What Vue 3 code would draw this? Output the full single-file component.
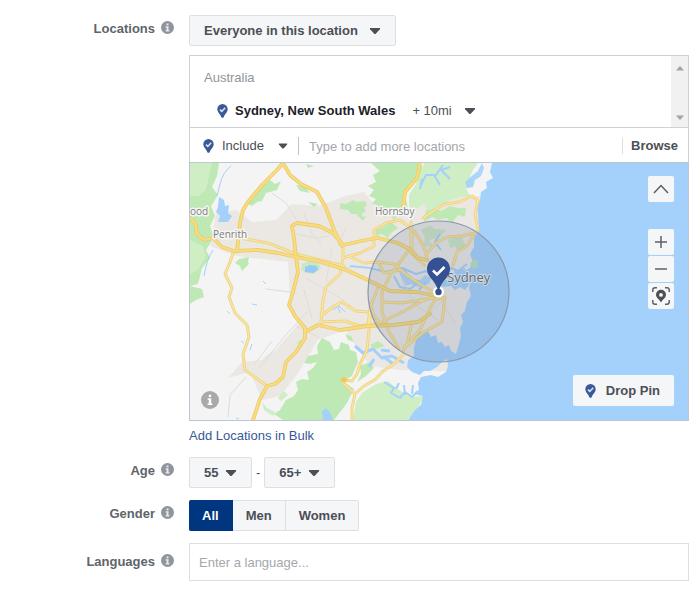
<script setup>
import { ref, h } from 'vue'

const audience = ref('Everyone in this location')
const radius = ref('+ 10mi')
const mode = ref('Include')
const query = ref('')
const minAge = ref('55')
const maxAge = ref('65+')
const gender = ref('All')
const language = ref('')

const genders = ['All', 'Men', 'Women']
const ages = Array.from({ length: 52 }, (_, i) => String(i + 13))

const InfoIcon = () =>
  h('svg', { width: 13, height: 13, viewBox: '0 0 13 13', 'aria-hidden': 'true' }, [
    h('circle', { cx: 6.5, cy: 6.5, r: 6.5, fill: '#90949c' }),
    h('path', { d: 'M5.5 2.4h2v1.8h-2zM4.6 5.3h2.9v3.9h.9v1.2H4.6V9.2h1V6.5h-1z', fill: '#e9ebee' })
  ])

const PinIcon = () =>
  h('svg', { width: 11, height: 14, viewBox: '0 0 11 14', 'aria-hidden': 'true' }, [
    h('path', { d: 'M5.5 0A5.2 5.2 0 0 0 .3 5.2C.3 8.3 3.3 9.8 4.3 13.2Q5.5 14.5 6.7 13.2C7.7 9.8 10.7 8.3 10.7 5.2A5.2 5.2 0 0 0 5.5 0z', fill: '#3b5998' }),
    h('path', { d: 'M3 5.6l1.8 1.8L8.200 3.7', fill: 'none', stroke: '#dfe6f5', 'stroke-width': 1.5 })
  ])

const Caret = () =>
  h('svg', { width: 12, height: 8, viewBox: '0 0 12 8', 'aria-hidden': 'true' }, [
    h('path', { d: 'M1.5 1h9q1.2 0 .4 1.2L7 6.6q-1 1-2 0L1.1 2.2Q.3 1 1.500 1z', fill: 'currentColor' })
  ])
</script>

<template>
  <form class="targeting" @submit.prevent>
    <div class="row">
      <label class="name" for="audience">Locations <InfoIcon /></label>
      <div class="field">
        <div class="picker button-like audience">
          <select id="audience" v-model="audience">
            <option>Everyone in this location</option>
          </select>
          <Caret />
        </div>

        <div class="chosen">
          <div class="places">
            <div class="country">Australia</div>
            <div class="place">
              <PinIcon />
              <strong>Sydney, New South Wales</strong>
              <div class="picker radius">
                <select v-model="radius" aria-label="Radius">
                  <option>+ 10mi</option>
                </select>
                <Caret />
              </div>
            </div>
          </div>
          <div class="scroller" aria-hidden="true">
            <svg width="10" height="6" viewBox="0 0 10 6"><path d="M1 5.500L5 1l4 4.500z" fill="#a3a3a3" /></svg>
            <svg width="10" height="6" viewBox="0 0 10 6"><path d="M1 .5L5 5 9 .5z" fill="#a3a3a3" /></svg>
          </div>
        </div>

        <div class="search">
          <PinIcon />
          <div class="picker mode">
            <select v-model="mode" aria-label="Include or exclude">
              <option>Include</option>
            </select>
            <Caret />
          </div>
          <input v-model="query" type="text" placeholder="Type to add more locations" aria-label="Add locations" />
          <button type="button" class="browse">Browse</button>
        </div>

        <div class="map">
          <svg class="canvas" viewBox="190 163 498 257" role="img" aria-label="Map of Sydney">
            <defs>
              <g id="highways">
                <path d="M283 163L276 171 262 185 248 202 243 210 240 223 237 251M283 163L290 175 301 184 317 192 326 208 334 230 342 246" />
                <path d="M190 218L195 223 197 234 204 240 213 238 222 247 234 251 258 250 278 253 296 257 322 262 346 270 370 281 390 291 416 292 437 296" />
                <path d="M296 257L294 238 292 226 297 223 319 226 333 233 343 245 366 240 378 238 398 243 411 250 418 258 427 260" />
                <path d="M296 257L298 272 293 292 289 305 295 316 305 328 305 338 296 352 286 362 283 377 275 384 267 386 260 399 253 420" />
                <path d="M305 332L318 325 340 330 368 326 394 325 418 322 430 314" />
                <path d="M420 163L417 178 405 192 403 207" />
              </g>
              <g id="streets">
                <path d="M234 251L230 262 225 274 232 288 229 297 235 313 247 325 249 337 243 354 245 370 256 378 267 386" />
                <path d="M240 238L268 243 296 254 344 266" />
                <path d="M343 245L343 258 340 274 326 287 323 300 321 322M343 258L360 253 374 246 374 230 386 223 400 220 415 232 424 247 427 258" />
                <path d="M348 256L364 263 378 262 394 264 408 276 420 284 437 294M423 218L432 212 445 204 459 202 472 196 478 201 475 214 478 230" />
                <path d="M427 253L437 242 447 237 462 236 475 233 467 246 457 252 453 265" />
                <path d="M412 233L412 246 400 262 390 275 382 292 382 312 388 330 399 349M411 222L411 246M378 262L384 273 400 270" />
                <path d="M321 316L334 306 342 302 356 311 368 312M321 322L345 321 360 326 380 323 406 310 426 299 438 296M382 302L402 303 434 298M368 325L370 308 378 288M380 323L374 316 370 304" />
                <path d="M371 308L369 330 367 350 360 364 357 374 352 381 345 380 343 383 355 394 352 408 352 420M355 394L364 386 376 379 382 372 395 363 403 355 404 347 420 330 430 308 438 296M434 300L445 297 442 322 424 332 404 348M408 340L412 322" />
                <path d="M408 250L424 265" />
              </g>
            </defs>

            <rect x="190" y="163" width="498" height="257" fill="#f3f4f3" />
            <!-- built-up area -->
            <path fill="#ebe8e4" d="M216 214L236 210 252 222 276 220 292 204 318 206 346 196 364 192 374 204 396 212 430 200 482 196 482 372 400 370 370 366 345 330 318 340 296 376 280 396 262 400 250 372 228 378 242 362 262 360 294 322 290 300 288 262 236 256 210 246z" />
            <path fill="#f3f4f3" d="M236 262L280 264 288 300 300 322 276 350 262 358 246 310 238 290z" />
            <!-- parks -->
            <g fill="#bfe9b4">
              <path d="M190 163H219L217 176 212 187 218 195 211 206 215 216 210 226 214 237 206 250 210 258 202 268 198 284 190 286z" />
              <path fill="#cfeec4" d="M190 163H212L206 190 198 196 190 196zM190 240L203 246 206 256 198 270 190 274z" />
              <path d="M262 187L270 180 275 184 281 181 277 190 266 193 262 201 257 202 252 206 246 203 254 198 256 192z" />
              <path d="M296 185L304 186 310 193 300 191zM308 202l10 2-4 3zM306 164l8 2-6 2zM239 259l10-2-1 5 1 2-7 7-2-5-5-3zM190 286l12 3 2 8-8 3-6 4z" />
              <path d="M340 203l6 1 7-4 4 2 8-1 2 5-3 1 2 5-4 1 0 6-5-5-6 0-3-4-8-1zM356 214l5 3 5-1-3 5z" />
              <path d="M371 163H420L424 170 417 178 410 188 405 196 408 208 402 204 400 212 403 217 397 216 394 221 389 212 385 218 380 212 378 206 372 203 376 199 369 196 374 190 368 186 376 182 373 175 380 171z" />
              <path d="M376 230L383 227 391 222 398 228 391 233 388 238 382 234 376 236zM426 210L432 207 441 211 450 206 458 208 466 208 465 217 458 215 452 223 446 218 438 220 432 217 424 222z" />
              <path fill="#cfeec4" d="M424 163H478L473 170 470 176 474 184 466 189 470 196 452 199 440 206 428 211 424 204 416 209 409 207 409 195 416 184z" />
              <path fill="#cde5c5" d="M421 230L430 225 434 229 446 230 440 237 429 240 434 247 424 246 425 238zM448 240L455 237 462 238 466 246 458 252 455 246 450 248z" />
              <path d="M322 338L330 342 334 350 339 349 341 342 349 345 350 350 356 352 358 362 352 376 343 381 354 389 347 403 334 420H283L274 414 280 410 286 400 294 396 298 390 296 382 302 379 309 380 307 372 313 368 317 362 310 364 304 363 308 356 318 354 317 346z" />
              <path d="M360 366L370 362 374 368 366 376 357 382 361 374zM370 345l8-4 7 5-10 3zM345 334l6 2 3 6-6-2z" />
              <path fill="#cfeec4" d="M362 393L376 384 388 381 399 390 410 397 424 396 418 408 407 420H353L356 402z" />
              <path d="M296 342l7-3-3 7zM278 398l6-7 4 4-7 6zM262 402l5 6 8 4-2 4-9-6z" opacity=".7" />
            </g>
            <!-- ocean and inlets -->
            <g fill="#a3d1fc">
              <path d="M688 163H492L490 172 493 178 486 182 487 188 481 192 480 200 477 207 478 214 479 230 474 238 474 247 470 254 473 262 469 270 471 280 469 288 471 296 467 302 465 311 461 315 463 322 460 328 461 336 459 344 456 354 451 351 449 345 445 347 442 342 438 343 436 335 431 337 428 331 423 333 419 331 416 340 414 348 414 356 408 360 407 367 412 372 420 375 424 371 430 371 437 367 442 362 447 359 448 366 446 372 438 377 431 375 421 377 418 383 419 390 414 394 423 396 421 405 415 410 408 420H688z" />
              <path d="M482 163l-4 8-5 4-8 7 2 6 6-1 2-7 6-4 3-8z" opacity=".9" />
              <path d="M219 197l5 3 1 6 4-1-1 8 4 3-4 6-10 0 2-6-4-4 2-5z" />
              <path d="M322 411l4-3 4 4 3 8h-10z" />
              <path d="M470 268l-6 3-8-1 2 5-6 1-3 5-8-3-4 5 6 4 8-1 4 4 5-3 5 3 4-5z" />
              <path d="M398 268l8 4 6 7 8 1 5-5 6 3-2 6-10 3-8-3-6 2-4-9z" opacity=".8" />
            </g>
            <path fill="#c7e9bf" d="M302 264l6-3 10 1 3 6-7 6-8-1-5-3z" />
            <path fill="#96c8fa" d="M305 267l5-2 7 1 1 4-5 3-8-1z" />
            <g fill="none" stroke="#a3d1fc" stroke-width="2" stroke-linejoin="round">
              <path d="M231 166q-8 6-11 18t-3 12M213 250q-6 8-9 26" stroke-width="1" />
              <path d="M443 165l-7 10-10 0-6 12m14-12 6 10m-2-14 12-4m-30 22 2-10m20-8 8 8" />
              <path d="M350 266l20 2 16 4 16-4 14 6 10-3 12 10 6-6 6 4m-24 3-7 8m-11-15-4-5m-10 6 6 11 10 2 8-6" />
              <path d="M440 234l-5 8 6 8m26 14-9 7-7-3-5 8m9-5 6 14m-20-16 3-10m13 14 8-4" />
              <path d="M404 363l-12-7-10 2-9-9-10 4-8-7m28 10 10 8m-12-14 9 1m-16 8-5 8" stroke-width="3" />
              <path d="M384 382l10 6-3 5 9 5 5-6 7 5 6-6m-22-2 3-6m5 2 1 10m8-10-1 9" stroke-width="2" />
              <path d="M333 310l6-4 6 6m-7-5 2 6M252 344l-2 6m-9-9 3 2M227 311l3 3M252 304l5 1M263 281l3 3M236 418l3 1" stroke-width="1" />
            </g>
            <path fill="#b9dfc4" d="M470 264l4-5 4 2 0 6-5 2z" />
            <!-- minor roads -->
            <g fill="none" stroke="#dfddda" stroke-width="1">
              <path d="M272 193l14 10 10 16m-30 70 32 4m-40 76 28-34 22-24m-62 66-16 18-2 22m26-52 18-24M304 214l8 20 10 10m-26-10 22 4 20-4m-38 24 28 8 24 2m-46 10 38 22m-40-10 8 28m20-70-6 34m20-54-8 18m-42 80 24 12M404 280l10 24 24 16m-36-6 20-18m20 8 14 20m-32-6 22-20" />
            </g>
            <!-- a dark casing under a lighter core -->
            <g fill="none" stroke-linejoin="round" stroke-linecap="round">
              <use href="#streets" stroke="#efd281" stroke-width="3" />
              <use href="#streets" stroke="#f9e7a8" stroke-width="1.2" />
              <use href="#highways" stroke="#edcb69" stroke-width="3.8" />
              <use href="#highways" stroke="#f8dd80" stroke-width="2" />
            </g>
            <path fill="#f2c84f" d="M340 379l4-2 4 3-4 3z" />
            <!-- town names -->
            <g class="towns">
              <text x="190" y="215">ood</text>
              <text x="213" y="238">Penrith</text>
              <text x="375" y="215">Hornsby</text>
            </g>
            <circle cx="438.500" cy="291.500" r="70.500" fill="#5a6f90" fill-opacity=".18" stroke="#8a97ab" stroke-width="1.200" />
            <text class="city" x="447" y="282">Sydney</text>
            <circle cx="438.500" cy="292" r="5.500" fill="#fff" />
            <circle cx="438.500" cy="292" r="3.200" fill="#34508e" />
            <path d="M438.500 257.500A11.500 11.500 0 0 0 427 269C427 277 435 280 437.500 289H439.500C442 280 450 277 450 269A11.500 11.500 0 0 0 438.500 257.500z" fill="#365193" />
            <path d="M433 270.500l4 4 7.500-7.500" fill="none" stroke="#fff" stroke-width="2.600" />
          </svg>

          <svg class="credits" width="18" height="18" viewBox="0 0 18 18" aria-hidden="true">
            <circle cx="9" cy="9" r="9" fill="#a9a9a9" />
            <path d="M7.800 3.800h2.400V6H7.800zM6.600 7.300h3.600v5.100h1.200v1.500H6.600v-1.500h1.200V8.800H6.600z" fill="#fff" />
          </svg>

          <div class="tools">
            <button type="button" class="tool collapse" aria-label="Collapse map">
              <svg width="18" height="18" viewBox="0 0 18 18"><path d="M2 13l7-7.500L16 13" /></svg>
            </button>
            <button type="button" class="tool" aria-label="Zoom in">
              <svg width="18" height="18" viewBox="0 0 18 18"><path d="M3 9h12M9 3v12" /></svg>
            </button>
            <button type="button" class="tool" aria-label="Zoom out">
              <svg width="18" height="18" viewBox="0 0 18 18"><path d="M3 9h12" /></svg>
            </button>
            <button type="button" class="tool" aria-label="Centre on pin">
              <svg width="18" height="18" viewBox="0 0 18 18">
                <path d="M.8 5V3Q.8.8 3 .8h2M13 .8h2q2.200 0 2.200 2.200v2M17.200 13v2q0 2.200-2.200 2.200h-2M5 17.200H3Q.8 17.200.8 15v-2" />
                <path class="solid" fill-rule="evenodd" d="M9 2.800a5 5 0 0 0-5 5c0 3.200 3.200 4.200 5 7.700 1.800-3.500 5-4.500 5-7.700a5 5 0 0 0-5-5zm0 3.200a1.900 1.900 0 1 1 0 3.800 1.900 1.900 0 0 1 0-3.800z" />
              </svg>
            </button>
          </div>

          <button type="button" class="drop"><PinIcon /> Drop Pin</button>
        </div>

        <a class="bulk" href="#bulk">Add Locations in Bulk</a>
      </div>
    </div>

    <div class="row">
      <label class="name" for="min-age">Age <InfoIcon /></label>
      <div class="field ages">
        <div class="picker button-like">
          <select id="min-age" v-model="minAge">
            <option v-for="age in ages" :key="age">{{ age }}</option>
          </select>
          <Caret />
        </div>
        <span>-</span>
        <div class="picker button-like">
          <select v-model="maxAge" aria-label="Maximum age">
            <option v-for="age in ages" :key="age">{{ age }}</option>
            <option>65+</option>
          </select>
          <Caret />
        </div>
      </div>
    </div>

    <div class="row">
      <div id="gender-name" class="name">Gender <InfoIcon /></div>
      <div class="field genders" role="radiogroup" aria-labelledby="gender-name">
        <label v-for="item in genders" :key="item" :class="{ active: item === gender }">
          <input v-model="gender" type="radio" name="gender" :value="item" />{{ item }}
        </label>
      </div>
    </div>

    <div class="row">
      <label class="name language-name" for="language">Languages <InfoIcon /></label>
      <div class="field">
        <input id="language" v-model="language" class="language" type="text" placeholder="Enter a language..." />
      </div>
    </div>
  </form>
</template>

<style>
body {
  margin: 0;
  background: #fff;
}
</style>

<style scoped>
.targeting {
  display: flex;
  flex-direction: column;
  gap: 12px;
  padding: 15px 11px 8px 0;
  font: 13px/16px "Liberation Sans", Arial, sans-serif;
  color: #4b4f56;
}

.targeting *,
.targeting {
  box-sizing: border-box;
}

select,
input,
button {
  margin: 0;
  border: 0;
  padding: 0;
  font: inherit;
  color: inherit;
  background: none;
  border-radius: 0;
}

svg {
  display: block;
  flex: none;
}

.row {
  display: grid;
  grid-template-columns: 174px minmax(0, 1fr);
  column-gap: 15px;
  align-items: start;
}

.name {
  display: flex;
  justify-content: flex-end;
  align-items: center;
  gap: 6px;
  padding-top: 6px;
  font-weight: bold;
  color: #606469;
}

.name svg {
  margin-bottom: 3px;
}

.language-name {
  padding-top: 11px;
}

.picker {
  display: inline-grid;
  align-items: center;
}

.picker > * {
  grid-area: 1 / 1;
}

.picker select {
  appearance: none;
  height: 29px;
}

.picker svg {
  justify-self: end;
  pointer-events: none;
}

.button-like {
  border: 1px solid #dddfe2;
  border-radius: 2px;
  background: #f5f6f7;
  font-weight: bold;
}

.button-like select {
  padding: 0 32px 0 14px;
}

.button-like svg {
  margin-right: 14px;
}

.chosen {
  display: flex;
  margin-top: 9px;
  border: 1px solid #cfd1d7;
}

.audience {
  display: inline-grid;
  vertical-align: top;
}

.audience select {
  padding-right: 37px;
}

.places {
  flex: 1;
  padding: 14px 0 0 14px;
}

.country {
  color: #90949c;
}

.place {
  display: flex;
  align-items: center;
  gap: 7px;
  padding-left: 13px;
  margin-top: 9px;
  height: 32px;
}

.place strong {
  color: #1d2129;
}

.radius {
  margin-left: 10px;
}

.radius select {
  padding-right: 24px;
}

.scroller {
  display: flex;
  flex-direction: column;
  justify-content: space-between;
  align-items: center;
  width: 17px;
  padding: 9px 0 6px;
  background: #f1f1f1;
}

.search {
  display: flex;
  align-items: center;
  height: 34px;
  padding: 2px 10px 0 13px;
  border: solid #cfd1d7;
  border-width: 0 1px;
}

.mode {
  margin-left: 8px;
}

.mode select {
  padding-right: 24px;
}

.mode svg {
  width: 10px;
}

.search input {
  flex: 1;
  min-width: 0;
  height: 18px;
  margin-left: 10px;
  padding-left: 10px;
  border-left: 1px solid #bec3c9;
  outline: 0;
}

input::placeholder {
  color: #a4a7ad;
  opacity: 1;
}

.browse {
  padding-left: 8px;
  border-left: 1px solid #dddfe2;
  font-weight: bold;
}

.map {
  position: relative;
  border: 1px solid #bcc6d4;
}

.canvas {
  width: 100%;
  height: auto;
}

.towns,
.city {
  font-family: "Open Sans", "Noto Sans", sans-serif;
  fill: #7b7b7b;
  stroke: #f6f6f4;
  stroke-width: 3px;
  stroke-linejoin: round;
  paint-order: stroke;
}

.towns {
  font-size: 10px;
}

.city {
  font-size: 13px;
  fill: #5f6b7a;
  stroke: #cfd9e2;
  stroke-width: 2px;
}

.credits {
  position: absolute;
  left: 11px;
  bottom: 11px;
}

.tools {
  position: absolute;
  top: 13px;
  right: 14px;
  display: grid;
  row-gap: 1px;
}

.tool {
  display: grid;
  place-items: center;
  width: 26px;
  height: 26px;
  border-radius: 2px;
  background: #f5f6f7;
}

.collapse {
  margin-bottom: 26px;
}

.tool svg {
  fill: none;
  stroke: #5c6066;
  stroke-width: 1.5px;
}

.tool .solid {
  fill: #4b4f56;
  stroke: none;
}

.drop {
  position: absolute;
  right: 14px;
  bottom: 14px;
  display: flex;
  align-items: center;
  gap: 10px;
  height: 31px;
  padding: 0 14px 0 12px;
  border-radius: 2px;
  background: #f5f6f7;
  font-weight: bold;
}

.bulk {
  display: block;
  width: fit-content;
  margin: 7px 0 1px;
  color: #385898;
  text-decoration: none;
}

.ages {
  display: flex;
  align-items: center;
  gap: 4px;
}

.genders {
  display: flex;
}

.genders label {
  display: grid;
  place-items: center;
  height: 31px;
  padding: 0 13px;
  border: 1px solid #dddfe2;
  border-left-width: 0;
  background: #f5f6f7;
  font-weight: bold;
  cursor: pointer;
}

.genders label:last-child {
  border-radius: 0 2px 2px 0;
}

.genders .active {
  border-color: #003580;
  border-radius: 2px 0 0 2px;
  background: #003580;
  color: #fff;
}

.genders input {
  position: absolute;
  opacity: 0;
  pointer-events: none;
}

.language {
  display: block;
  width: 100%;
  height: 38px;
  padding: 0 9px;
  border: 1px solid #dddfe2;
}
</style>
